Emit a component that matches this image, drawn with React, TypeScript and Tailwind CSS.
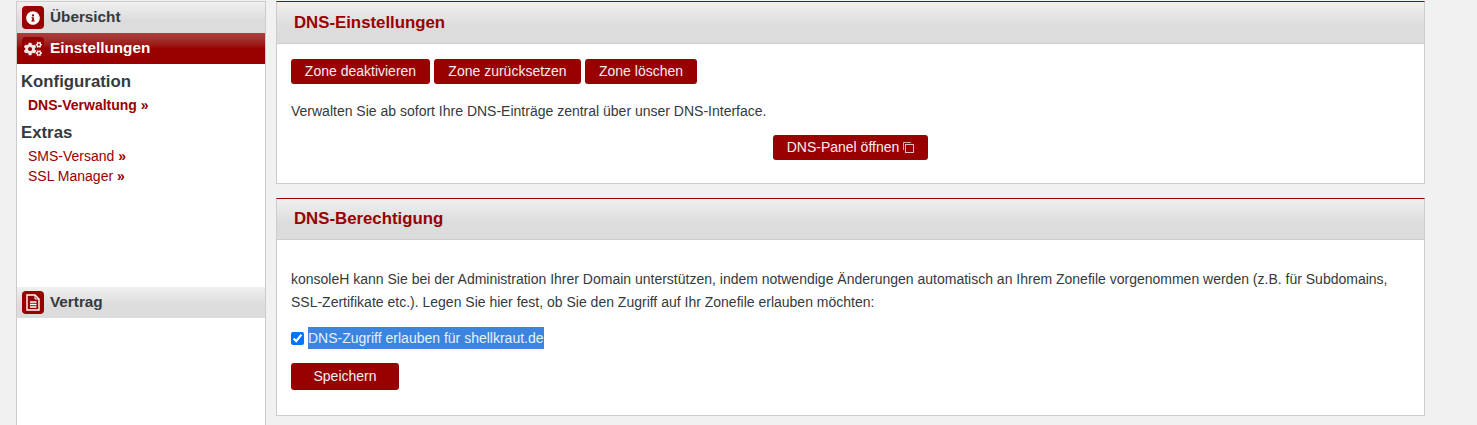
import React from 'react';
import { FaInfoCircle, FaCogs } from 'react-icons/fa';

const headGrey = 'bg-gradient-to-b from-[#f0f0f0] to-[#dcdcdc] to-60%';

const Button: React.FC<{ className?: string; children: React.ReactNode }> = ({ className = '', children }) => (
  <button className={`h-[25px] rounded-[3px] bg-[#990000] text-[14px] leading-[25px] text-[#f4eef2] ${className}`}>
    {children}
  </button>
);

const NavHead: React.FC<{ icon: React.ReactNode; label: string; className?: string }> = ({ icon, label, className = '' }) => (
  <div className={`flex h-[31px] items-center pl-[5px] ${headGrey} ${className}`}>
    <span className="flex h-[23px] w-[22px] items-center justify-center rounded-[4px] bg-[#990000] text-white">{icon}</span>
    <span className="ml-[6px] text-[15.3px] font-bold text-[#333a40]">{label}</span>
  </div>
);

const PanelHead: React.FC<{ title: string; className?: string }> = ({ title, className = '' }) => (
  <div className={`border-b border-[#cccccc] pl-[17px] text-[16.8px] font-bold text-[#990000] ${headGrey} ${className}`}>
    {title}
  </div>
);

export default function App() {
  return (
    <div className="flex h-[425px] items-start overflow-hidden bg-[#f1f1f1] pt-px pl-[16px] font-['Liberation_Sans',Arial,sans-serif] text-[14px] text-[#333a40]">
      <aside className="h-[440px] w-[250px] shrink-0 border-x border-t border-[#cccccc] bg-white">
        <NavHead icon={<FaInfoCircle className="h-[14px] w-[14px]" />} label="Übersicht" />
        <div className="flex h-[31px] items-center bg-gradient-to-b from-[#a84040] to-[#990000] to-50% pl-[5px]">
          <span className="flex h-[23px] w-[22px] items-center justify-center rounded-[4px] bg-[#990000] text-[#f1e6e6]">
            <FaCogs className="h-[18px] w-[18px]" />
          </span>
          <span className="ml-[6px] text-[15.3px] font-bold text-white">Einstellungen</span>
        </div>
        <div className="h-[223px] pt-[8px] pl-[4px]">
          <h3 className="text-[16.8px] leading-[20px] font-bold">Konfiguration</h3>
          <a className="mt-[3px] block pl-[7px] leading-[20px] font-bold text-[#990000]">DNS-Verwaltung »</a>
          <h3 className="mt-[8px] text-[16.8px] leading-[20px] font-bold">Extras</h3>
          <a className="mt-[3px] block pl-[7px] leading-[20px] text-[#990000]">SMS-Versand <b>»</b></a>
          <a className="block pl-[7px] leading-[20px] text-[#990000]">SSL Manager <b>»</b></a>
        </div>
        <NavHead
          icon={
            <svg viewBox="0 0 14 17" className="h-[17px] w-[14px]" fill="none" stroke="currentColor">
              <path d="M1 1H9L13 5V16H1Z" strokeWidth="1.4" />
              <path d="M9 1V5H13" strokeWidth="1" />
              <path d="M4 8H10.5M4 10.5H10.5M4 13H10.5" strokeWidth="1.4" />
            </svg>
          }
          label="Vertrag"
        />
      </aside>

      <main className="ml-[10px] flex w-[1149px] shrink-0 flex-col gap-[14px]">
        <section className="h-[183px] border-x border-b border-t border-[#cccccc] border-t-[#990000] bg-white">
          <PanelHead title="DNS-Einstellungen" className="h-[42px] leading-[41px]" />
          <div className="px-[14px] pt-[15px]">
            <div className="flex gap-[4px]">
              <Button className="w-[139px]">Zone deaktivieren</Button>
              <Button className="w-[147px]">Zone zurücksetzen</Button>
              <Button className="w-[112px]">Zone löschen</Button>
            </div>
            <p className="mt-[17px] leading-[20px]">Verwalten Sie ab sofort Ihre DNS-Einträge zentral über unser DNS-Interface.</p>
            <div className="mt-[14px] flex justify-center">
              <Button className="inline-flex w-[155px] items-center justify-center gap-[4px]">
                DNS-Panel öffnen
                <svg viewBox="0 0 11 11" className="h-[11px] w-[11px]" fill="none" stroke="currentColor" strokeWidth="1">
                  <path d="M0.5 8V0.5H8" opacity="0.7" />
                  <rect x="2.5" y="2.5" width="8" height="8" opacity="0.8" />
                </svg>
              </Button>
            </div>
          </div>
        </section>

        <section className="h-[218px] border-x border-b border-t border-[#cccccc] border-t-[#990000] bg-white">
          <PanelHead title="DNS-Berechtigung" className="h-[41px] leading-[39px]" />
          <div className="px-[14px] pt-[28px]">
            <p className="leading-[23px]">
              konsoleH kann Sie bei der Administration Ihrer Domain unterstützen, indem notwendige Änderungen automatisch an Ihrem Zonefile vorgenommen werden (z.B. für Subdomains, SSL-Zertifikate etc.). Legen Sie hier fest, ob Sie den Zugriff auf Ihr Zonefile erlauben möchten:
            </p>
            <label className="mt-[13px] flex h-[22px] items-center">
              <input type="checkbox" defaultChecked className="m-0 h-[13px] w-[13px] accent-[#0075ff]" />
              <span className="ml-[4px] bg-[#3b84e0] leading-[22px] text-[#e8f0fb]">DNS-Zugriff erlauben für shellkraut.de</span>
            </label>
            <Button className="mt-[14px] block h-[27px] w-[108px] leading-[27px]">Speichern</Button>
          </div>
        </section>
      </main>
    </div>
  );
}
